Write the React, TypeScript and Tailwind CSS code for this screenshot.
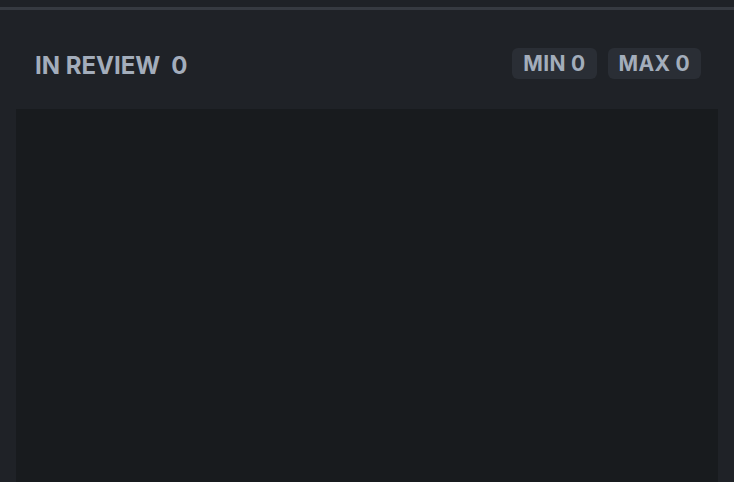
export default function App() {
  return (
    <div
      className="h-[482px] w-[734px] overflow-hidden bg-[#1f2227]"
      style={{ fontFamily: "Inter, 'Noto Sans', sans-serif" }}
    >
      <div className="h-[7px]" />
      <div className="h-[3px] bg-[#363a41]" />
      <div className="flex h-[99px] items-center justify-between pl-[35px] pr-[33px] pt-[8px]">
        <div className="flex translate-y-[2px] items-center gap-[11px] text-[24px] font-bold leading-none text-[#a3adbb]">
          <span>IN REVIEW</span>
          <span>0</span>
        </div>
        <div className="flex items-center gap-[11px]">
          <span className="rounded-[6px] bg-[#2a2e35] px-[11px] py-[5px] text-[21px] font-bold leading-[21px] tracking-[0.015em] text-[#a3adbb]">
            MIN 0
          </span>
          <span className="rounded-[6px] bg-[#2a2e35] px-[11px] py-[5px] text-[21px] font-bold leading-[21px] tracking-[0.015em] text-[#a3adbb]">
            MAX 0
          </span>
        </div>
      </div>
      <div className="mx-[16px] h-[400px] bg-[#181b1e]" />
    </div>
  );
}
